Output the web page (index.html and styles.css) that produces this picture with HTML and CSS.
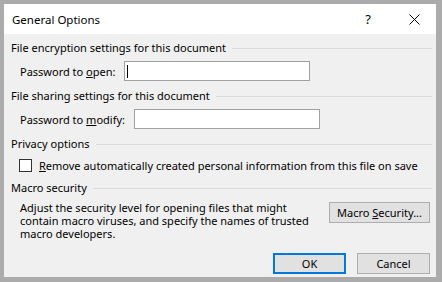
FILE: index.html
```html
<!DOCTYPE html>
<html lang="en">
<head>
  <meta charset="UTF-8">
  <title>General Options</title>
  <link rel="stylesheet" href="styles.css">
</head>
<body>
  <div class="dialog">
    <div class="titlebar">
      <span class="title">General Options</span>
      <span class="help">?</span>
      <svg class="close" width="11" height="11" viewBox="0 0 11 11">
        <path d="M0.5 0.5 L10.5 10.5 M10.5 0.5 L0.5 10.5" stroke="#000" stroke-width="1" fill="none"/>
      </svg>
    </div>

    <div class="content">
      <div class="group-head g1"><span>File encryption settings for this document</span><i class="rule"></i></div>
      <div class="field-row">
        <label>Password to <u>o</u>pen:</label>
        <div class="textbox"><span class="caret"></span></div>
      </div>

      <div class="group-head g2"><span>File sharing settings for this document</span><i class="rule"></i></div>
      <div class="field-row">
        <label>Password to <u>m</u>odify:</label>
        <div class="textbox"></div>
      </div>

      <div class="group-head g3"><span>Privacy options</span><i class="rule"></i></div>
      <div class="check-row">
        <span class="checkbox"></span>
        <span><u>R</u>emove automatically created personal information from this file on save</span>
      </div>

      <div class="group-head g4"><span>Macro security</span><i class="rule"></i></div>
      <div class="macro-row">
        <p class="macro-text">Adjust the security level for opening files that might contain macro viruses, and specify the names of trusted macro developers.</p>
        <button class="btn macro-btn">Macro <u>S</u>ecurity...</button>
      </div>

      <div class="footer">
        <button class="btn btn-default">OK</button>
        <button class="btn">Cancel</button>
      </div>
    </div>
  </div>
</body>
</html>
```

FILE: styles.css
```css
html, body {
    margin: 0;
    padding: 0;
}
body {
    width: 442px;
    height: 282px;
    background-color: #ababab;
    font-family: 'Noto Sans', 'Liberation Sans', sans-serif;
    font-size: 11px;
    color: #000;
    overflow: hidden;
}
.dialog {
    margin: 4px 0 0 4px;
    width: 432px;
    height: 273px;
    background-color: #f0f0f0;
    display: flex;
    flex-direction: column;
}
.titlebar {
    height: 30px;
    background-color: #fff;
    display: flex;
    align-items: center;
    padding-left: 8px;
}
.title {
    flex: 1;
    font-size: 11.5px;
}
.help {
    font-size: 13px;
    margin-right: 38px;
}
.close {
    margin-right: 16px;
}
.content {
    padding: 0 4px 0 7px;
}
.group-head {
    display: flex;
    align-items: center;
    height: 16px;
    line-height: 16px;
    white-space: nowrap;
}
.group-head .rule {
    flex: 1;
    border-top: 1px solid #dcdcdc;
    margin-left: 6px;
}
.g1 { margin-top: 6px; }
.g2, .g3, .g4 { margin-top: 7px; }
.field-row {
    display: flex;
    align-items: center;
    margin-top: 5px;
    padding-left: 9px;
    height: 20px;
}
.textbox {
    margin-left: 9px;
    width: 184px;
    height: 18px;
    border: 1px solid #a0a0a0;
    background-color: #fff;
    display: flex;
    align-items: center;
}
.caret {
    width: 1px;
    height: 13px;
    margin-left: 2px;
    background-color: #000;
}
.check-row {
    display: flex;
    align-items: center;
    height: 16px;
    margin-top: 5px;
    padding-left: 8px;
    white-space: nowrap;
}
.checkbox {
    width: 11px;
    height: 11px;
    border: 1px solid #333;
    background-color: #fff;
    margin-right: 7px;
}
.macro-row {
    display: flex;
    align-items: flex-start;
    justify-content: space-between;
    padding-left: 9px;
    margin-top: 5px;
    padding-right: 2px;
}
.macro-text {
    margin: 0;
    width: 296px;
    line-height: 13px;
}
.btn {
    font-family: inherit;
    font-size: 11px;
    color: #000;
    background-color: #e1e1e1;
    border: 1px solid #adadad;
    height: 21px;
    padding: 0;
    margin: 0;
}
.macro-btn {
    width: 101px;
    margin-top: 1px;
}
.footer {
    display: flex;
    justify-content: flex-end;
    gap: 11px;
    margin-top: 13px;
    padding-right: 2px;
}
.footer .btn {
    width: 73px;
}
.btn-default {
    border: 2px solid #0078d7;
}
```
